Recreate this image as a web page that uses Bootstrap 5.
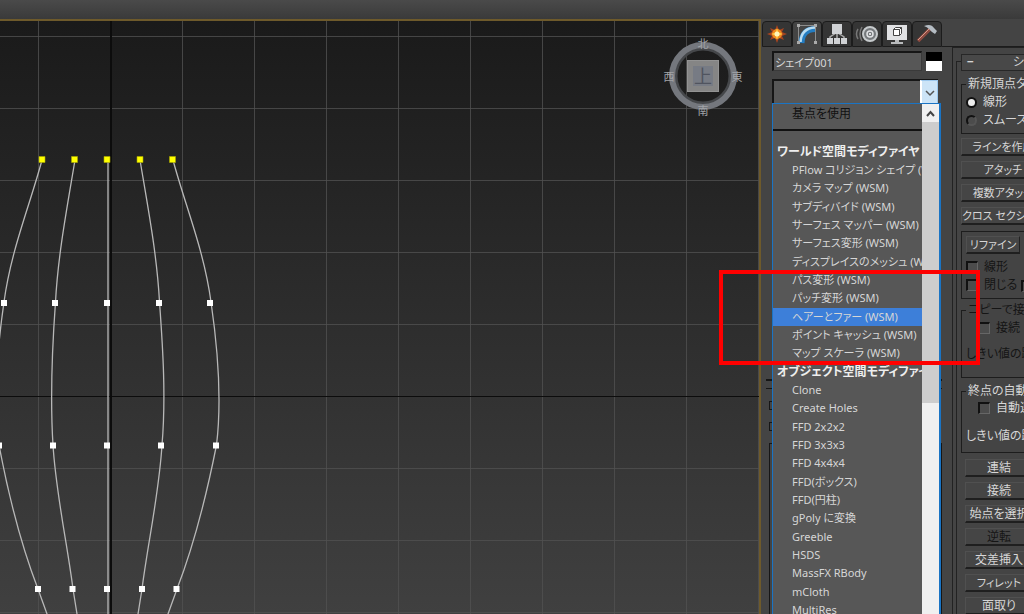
<!DOCTYPE html>
<html lang="ja">
<head>
<meta charset="utf-8">
<meta name="viewport" content="width=device-width, initial-scale=1">
<title>モディファイヤ リスト</title>
<link href="https://cdn.jsdelivr.net/npm/bootstrap@5.3.0/dist/css/bootstrap.min.css" rel="stylesheet">
<style>
body{background:#444;color:#d6d6d6;font:12px/18px "Noto Sans","Noto Sans CJK JP",sans-serif;font-feature-settings:"palt"}
button,input,select{font:inherit;color:inherit;font-feature-settings:inherit}
.topbar{height:19px;background:linear-gradient(#4a4a4a,#3a3a3a)}
.viewport{border:solid #6e5a2b;border-width:2px 2px 0 0;background:linear-gradient(#1a1a1a,#404040);min-width:0}
.scene{display:block;width:100%;height:100%}
.cube{top:16px;right:16px}
.panel{width:263px;background:#444}
.tabs{height:28px;padding:2px 0 0 1px}
.tabs::after{content:"";flex:1;border-bottom:1px solid #1c1c1c}
.tabbtn{width:30px;padding:0;border:1px solid #1c1c1c;border-radius:4px 4px 0 0;background:#353535;line-height:0}
.tabbtn.on{background:#444;border-bottom-color:#444}
.leftcol{width:191px;padding:4px 10px 0 11px}
.sunk{background:#575757;border:solid #161616;border-width:2px 1px 1px 2px;border-radius:0}
.namebox{height:20px;width:150px;padding:0 1px;font-size:11px;border-color:#161616 #3a3a3a #3a3a3a #161616}
.swatch{width:16px;height:19px;padding:0;border:0;background:linear-gradient(#000 9px,#fff 9px)}
.combo{height:26px;width:100%;appearance:none}
.combobtn{top:1px;right:0;width:18px;height:24px;padding:0;border:1px solid #9cc8ee;border-left:2px solid #fff;background:#cce4f7;line-height:0}
.menu{top:56px;left:11px;width:169px;bottom:0;background:#575757;border:solid #1a74c4;border-width:1px 2px 0 1px;z-index:3}
.opt{display:block;width:100%;height:18px;padding:0 0 0 19px;border:0;background:none;font-size:11px;text-align:left;white-space:nowrap;overflow:hidden}
.opts li:nth-child(3n){padding-bottom:1px}
.opt.sel{background:#3d7fd9}
.grp{padding-left:4px;font-weight:700;height:18px;white-space:nowrap;color:#eee}
.opt.first{color:#111;font-size:12px;height:27px;padding-bottom:6px;border-bottom:2px solid #111;margin-bottom:12px}
.sbar{width:17px;background:#f0f0f0;flex:none;line-height:0}
.sbar .thumb{height:281px;background:#cdcdcd}
.stack{height:270px;margin:6px 0 0 -6px;border-bottom:2px solid #161616}
.stackline{height:8px;margin-left:-6px;border-bottom:1px solid #161616}
.tool{width:14px;height:9px;margin:12px 0 0 -3px;border:1px solid #161616}
.toolbox{height:180px;margin:12px 0 0 -3px;border:1px solid #161616}
.rightcol{flex:1;min-width:0;border:solid #222;border-width:1px 0 0 1px;padding:4px 0 0 3px;overflow:hidden}
.roll{border-left:1px solid #222;border-top:1px solid #222;margin-top:9px}
.rollin{width:76px;margin-top:-8px;padding-left:4px}
.rollhead{height:17px;width:100%;padding:0 8px 0 5px;line-height:14px;background:#484848;border:1px solid #272727;display:flex;justify-content:space-between}
.rb{display:block;width:100%;height:18px;padding:0;border:1px solid #505050;border-bottom:2px solid #1f1f1f;border-right-color:#222;background:#454545;line-height:15px;white-space:nowrap}
.rb.kana{font-size:11px}
.rb:disabled{color:#151515}
.refine{width:54px;color:#d6d6d6}
.stackbtn{display:grid;gap:5px;margin-bottom:6px}
fieldset.box{border:1px solid #1d1d1d;border-right:0;min-width:0;white-space:nowrap}
fieldset.box legend{float:none;width:auto;font-size:12px;line-height:18px;margin:0 0 0 5px;padding:0 2px}
.box.copy{margin-top:2px;padding-bottom:14px}
.box.ends{margin:4px 0 6px;padding-bottom:7px}
.ends .field{margin:-1px 0 10px}
.off{color:#151515}
.ck,.rd{appearance:none;width:12px;height:12px;margin:0;border:solid #111;border-width:2px 1px 1px 2px;background:#4c4c4c;flex:none}
.ck{border-right-color:#666;border-bottom-color:#666}
.rd{width:11px;height:11px;border-radius:50%;border-width:2px;border-right-color:#555;border-bottom-color:#555}
.rd:checked{background:#eee;border-color:#111}
.field{display:flex;align-items:center;height:18px;gap:6px}
.marker{left:-42px;top:223px;width:261px;height:95px;border:4px solid #f00;z-index:4;pointer-events:none}
</style>
<script src="https://cdn.jsdelivr.net/npm/bootstrap@5.3.0/dist/js/bootstrap.bundle.min.js"></script>
</head>
<body class="vh-100 overflow-hidden d-flex flex-column">
<header class="topbar flex-shrink-0"></header>
<main class="d-flex flex-grow-1 overflow-hidden">
<section class="viewport flex-grow-1 position-relative overflow-hidden">
<svg class="scene" aria-label="ビューポート">
<defs><pattern id="grid" x="38" y="15" width="72" height="72" patternUnits="userSpaceOnUse"><path d="M.5 0V72M0 .5H72" stroke="#505050" stroke-opacity=".8"/></pattern></defs>
<rect width="100%" height="100%" fill="url(#grid)"/>
<line x1="111" x2="111" y1="0" y2="100%" stroke="#0c0c0c" stroke-width="2"/>
<line x1="0" x2="100%" y1="375.500" y2="375.500" stroke="#0c0c0c"/>
<g transform="translate(0 -21)">
<g fill="none" stroke="#b8b8b8" stroke-width="1.300">
<path d="M42 160C30 205 11 250 4 302C-3 350-7 400-1 445C9 498 21 545 38 589L47 614L60 650"/>
<path d="M75 160C67 208 58 255 55.500 302C52 350 50 398 53 445C56 494 67 542 73 589L77 614L84 650"/>
<path d="M108 160V1200"/>
<path d="M140 160C148 208 157 255 159.500 302C163 350 166 398 162 445C159 494 148 542 142 589L138 614L131 650"/>
<path d="M173 160C185 205 204 250 211 302C218 350 222 400 216.500 445C206 498 194 545 177 589L168 614L155 650"/>
</g>
<path fill="#ff0" stroke="#aaa800" stroke-width=".6" d="M39 156.500h6v6h-6zM71.500 156.500h6v6h-6zM104 156.500h6v6h-6zM137 156.500h6v6h-6zM169.500 156.500h6v6h-6z"/>
<path fill="#fff" d="M1 300h6v6h-6zM52 300h6v6h-6zM104 300h6v6h-6zM156 300h6v6h-6zM207 300h6v6h-6zM-4 442.500h6v6h-6zM50 442.500h6v6h-6zM104 442.500h6v6h-6zM158 442.500h6v6h-6zM213 442.500h6v6h-6zM35 586h6v6h-6zM69.500 586h6v6h-6zM104 586h6v6h-6zM139 586h6v6h-6zM173.500 586h6v6h-6z"/>
</g>
</svg>
<svg class="cube position-absolute" width="80" height="82" viewBox="0 0 80 82" text-anchor="middle" font-size="11">
<circle cx="40" cy="39" r="27" fill="none" stroke="#45474a" stroke-width="3"/>
<circle cx="40" cy="39" r="31" fill="none" stroke="#74777d" stroke-width="6"/>
<rect x="24.500" y="23.500" width="31" height="31" fill="#858585" stroke="#939393"/><rect x="30" y="29" width="20" height="20" fill="#777b84"/>
<text x="40" y="46" font-size="18" fill="#50545f">上</text>
<g fill="#a2a4a8"><text x="40" y="11">北</text><text x="6" y="44">西</text><text x="74" y="44">東</text><text x="40" y="78">南</text></g>
</svg>
</section>
<aside class="panel flex-shrink-0 position-relative d-flex flex-column">
<nav class="tabs d-flex flex-shrink-0" aria-label="コマンド パネル">
<button class="tabbtn" aria-label="作成"><svg width="26" height="24" viewBox="0 0 26 24"><path d="M13 3l2 5 5-2-2 4 5 2-5 2 2 4-5-2-2 5-2-5-5 2 2-4-5-2 5-2-2-4 5 2z" fill="#a54420"/><circle cx="13" cy="12" r="5" fill="#f08a20"/><path d="M13 6l1.500 4.500L19 12l-4.500 1.500L13 18l-1.500-4.500L7 12l4.500-1.500z" fill="#ffc640"/><circle cx="13" cy="12" r="2.500" fill="#fff6bb"/></svg></button>
<button class="tabbtn on" aria-label="修正"><svg width="26" height="24" viewBox="0 0 26 24"><path d="M4.500 20.500V3.500h17v17" fill="none" stroke="#8d8d8d"/><path d="M7.500 21C8 12 12 7.500 21 7" fill="none" stroke="#247dc2" stroke-width="6"/><path d="M6.500 20C7 11 12 6 21 5.500" fill="none" stroke="#b8dcf2" stroke-width="2.500"/><path d="M3 2h3v3H3zM20 2h3v3h-3zM3 19h3v3H3zM20 19h3v3h-3z" fill="#aaa"/></svg></button>
<button class="tabbtn" aria-label="階層"><svg width="28" height="24" viewBox="0 0 28 24"><path d="M14 11v6M7 17v-2L13 11M21 17v-2l-6-4" fill="none" stroke="#aaa" stroke-width="1.500"/><path d="M9 2h10v10H9z" fill="#d0d2d5"/><path d="M4 16h6v6H4zM11 16h6v6h-6zM18 16h6v6h-6z" fill="#d0d2d5"/></svg></button>
<button class="tabbtn" aria-label="モーション"><svg width="28" height="24" viewBox="0 0 28 24"><g fill="none"><path d="M5 7q-3 5 0 10M9 5q-4 7 0 14" stroke="#777" stroke-width="1.500"/><circle cx="17" cy="12" r="7" fill="#75797c" stroke="#c6cacc" stroke-width="2"/><circle cx="17" cy="12" r="3" stroke="#e1e3e5" stroke-width="1.500"/></g><circle cx="17" cy="12" r="1" fill="#fff"/></svg></button>
<button class="tabbtn" aria-label="表示"><svg width="28" height="24" viewBox="0 0 28 24"><path d="M4 3h20v15H4z" fill="#e1e2e4"/><path d="M12 18h4v2h4v2H8v-2h4z" fill="#b9bbbd"/><path d="M10.500 7.500l2-2h6v6l-2 2h-6zM10.500 7.500h6v6m0-6l2-2" fill="#fff" stroke="#444"/></svg></button>
<button class="tabbtn" aria-label="ユーティリティ"><svg width="28" height="24" viewBox="0 0 28 24"><path d="M17 7L5 19" stroke="#8d4a40" stroke-width="3.500"/><path d="M16 7L5 18" stroke="#d59a8c"/><path d="M11 4q7-3 10 2l3 3-2 3-3-2-3-3q-2-2-5-3z" fill="#b4bcc3"/></svg></button>
</nav>
<div class="d-flex flex-grow-1 position-relative">
<div class="leftcol flex-shrink-0">
<div class="d-flex justify-content-between align-items-center mb-2"><input class="namebox sunk" value="シェイプ001" aria-label="名前"><button class="swatch" aria-label="色"></button></div>
<div class="position-relative me-1"><select class="combo sunk d-block" aria-label="モディファイヤ リスト"><option></option></select><button class="combobtn position-absolute" aria-label="開く"><svg width="14" height="20" viewBox="0 0 14 20"><path d="M3 9l4 4 4-4" fill="none" stroke="#555" stroke-width="1.500"/></svg></button></div>
<div class="stack"></div><div class="stackline"></div><div class="tool"></div><div class="tool"></div><div class="toolbox"></div>
</div>
<div class="menu position-absolute d-flex overflow-hidden">
<div class="flex-grow-1 overflow-hidden">
<button class="opt first">基点を使用</button>
<ul class="opts list-unstyled m-0">
<li class="grp">ワールド空間モディファイヤ</li>
<li><button class="opt">PFlow コリジョン シェイプ (WSM)</button></li>
<li><button class="opt">カメラ マップ (WSM)</button></li>
<li><button class="opt">サブディバイド (WSM)</button></li>
<li><button class="opt">サーフェス マッパー (WSM)</button></li>
<li><button class="opt">サーフェス変形 (WSM)</button></li>
<li><button class="opt">ディスプレイスのメッシュ (WSM)</button></li>
<li><button class="opt">パス変形 (WSM)</button></li>
<li><button class="opt">パッチ変形 (WSM)</button></li>
<li><button class="opt sel">ヘアーとファー (WSM)</button></li>
<li><button class="opt">ポイント キャッシュ (WSM)</button></li>
<li><button class="opt">マップ スケーラ (WSM)</button></li>
<li class="grp">オブジェクト空間モディファイヤ</li>
<li><button class="opt">Clone</button></li>
<li><button class="opt">Create Holes</button></li>
<li><button class="opt">FFD 2x2x2</button></li>
<li><button class="opt">FFD 3x3x3</button></li>
<li><button class="opt">FFD 4x4x4</button></li>
<li><button class="opt">FFD(ボックス)</button></li>
<li><button class="opt">FFD(円柱)</button></li>
<li><button class="opt">gPoly に変換</button></li>
<li><button class="opt">Greeble</button></li>
<li><button class="opt">HSDS</button></li>
<li><button class="opt">MassFX RBody</button></li>
<li><button class="opt">mCloth</button></li>
<li><button class="opt">MultiRes</button></li>
</ul>
</div>
<div class="sbar"><svg width="17" height="18" viewBox="0 0 17 18"><path d="M5 12l3.500-4 3.500 4" fill="none" stroke="#444" stroke-width="2"/></svg><div class="thumb"></div></div>
</div>
<div class="rightcol"><div class="roll h-100"><div class="rollin">
<button class="rollhead"><b>−</b><span>シ</span></button>
<fieldset class="box mt-1 mb-1 pb-1 ps-1"><legend class="ms-0">新規頂点タイプ</legend>
<label class="field"><input type="radio" name="vt" class="rd" checked>線形</label>
<label class="field"><input type="radio" name="vt" class="rd">スムーズ</label></fieldset>
<div class="stackbtn"><button class="rb kana">ラインを作成</button><button class="rb kana">アタッチ</button><button class="rb kana">複数アタッチ</button><button class="rb kana">クロス セクション</button></div>
<fieldset class="box ps-1 pt-1 pb-1 off"><button class="rb kana refine mb-1">リファイン</button>
<div class="d-flex gap-3"><label class="field"><input type="checkbox" class="ck" disabled>線形</label><input type="checkbox" class="ck mt-1" aria-label="閉じる" disabled></div>
<div class="d-flex gap-1"><label class="field"><input type="checkbox" class="ck" disabled>閉じる</label><input type="checkbox" class="ck mt-1" aria-label="連結" disabled></div></fieldset>
<fieldset class="box copy off ps-1"><legend class="ms-0">コピーで接続</legend>
<label class="field ms-2 ps-1 mb-2"><input type="checkbox" class="ck" disabled>接続</label><div>しきい値の距離</div></fieldset>
<fieldset class="box ends ps-1"><legend class="ms-0">終点の自動連結</legend>
<label class="field ms-2 ps-1"><input type="checkbox" class="ck">自動連結</label><div>しきい値の距離</div></fieldset>
<div class="stackbtn ms-1"><button class="rb">連結</button><button class="rb">接続</button><button class="rb">始点を選択</button><button class="rb" disabled>逆転</button><button class="rb">交差挿入</button><button class="rb kana">フィレット</button><button class="rb">面取り</button></div>
</div></div></div>
<div class="marker position-absolute"></div>
</div>
</aside>
</main>
</body>
</html>
